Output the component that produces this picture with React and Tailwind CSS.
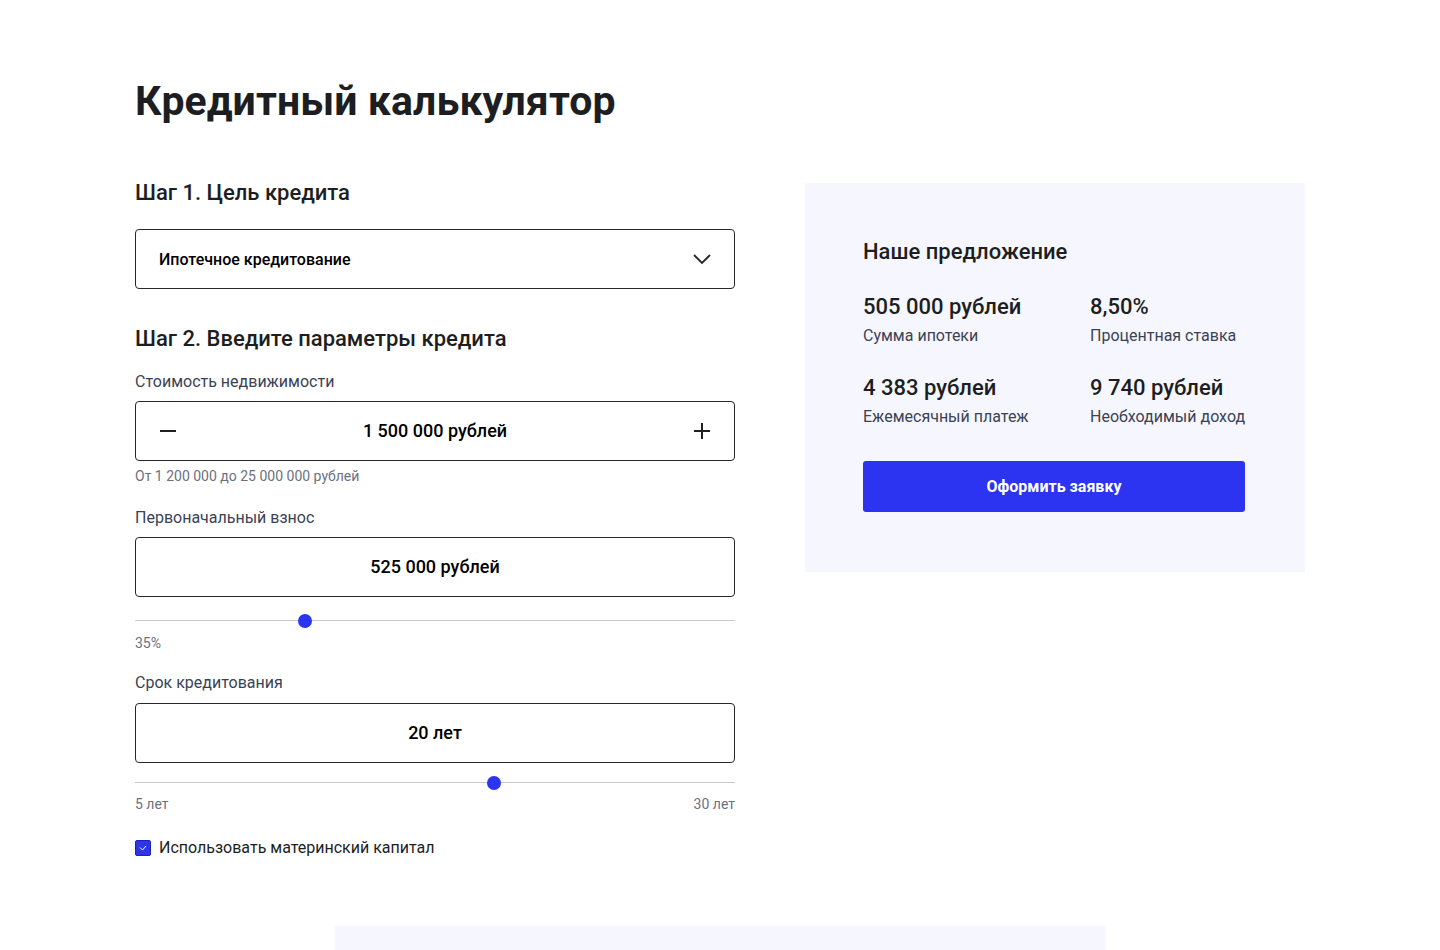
import React from "react";

function Slider({ pos }) {
  return (
    <div className="relative h-[14px] w-full">
      <div className="absolute left-0 right-0 top-[6px] h-px bg-[#c5c7d3]" />
      <div
        className="absolute top-0 h-[14px] w-[14px] -ml-[7px] rounded-full bg-[#2b34f0]"
        style={{ left: pos }}
      />
    </div>
  );
}

function Field({ children }) {
  return (
    <div className="flex h-[60px] w-full items-center justify-center rounded-[4px] border border-[#26272b] text-[18px] font-medium leading-[24px] text-black">
      {children}
    </div>
  );
}

export default function App() {
  return (
    <div className="min-h-[950px] bg-white text-[#1d1e22]" style={{ fontFamily: "Roboto, 'Noto Sans', sans-serif" }}>
      <div className="mx-auto w-[1170px] pt-[73px]">
        <h1 className="text-[41px] font-bold leading-[56px] tracking-[0.1px] text-[#1d1e22]">Кредитный калькулятор</h1>
        <div className="mt-[50px] flex gap-[70px]">
          <div className="w-[600px]">
            <h2 className="text-[22px] font-medium leading-[28px]">Шаг 1. Цель кредита</h2>
            <div className="mt-[22px] flex h-[60px] items-center justify-between rounded-[4px] border border-[#26272b] pl-[23px] pr-[22px]">
              <span className="pt-[2px] text-[16px] font-medium leading-[20px] text-black">Ипотечное кредитование</span>
              <svg width="20" height="12" viewBox="0 0 20 12" fill="none">
                <path d="M2 2l8 8 8-8" stroke="#26272b" strokeWidth="1.8" />
              </svg>
            </div>
            <h2 className="mt-[36px] text-[22px] font-medium leading-[28px]">Шаг 2. Введите параметры кредита</h2>
            <div className="mt-[19px] text-[16px] leading-[20px] text-[#3b4255]">Стоимость недвижимости</div>
            <div className="mt-[9px] flex h-[60px] items-center justify-between rounded-[4px] border border-[#26272b] px-[23px]">
              <svg width="18" height="18" viewBox="0 0 18 18" fill="none">
                <path d="M1 9h16" stroke="#1f2024" strokeWidth="2" />
              </svg>
              <span className="text-[18px] font-medium leading-[24px] text-black">1 500 000 рублей</span>
              <svg width="18" height="18" viewBox="0 0 18 18" fill="none">
                <path d="M1 9h16M9 1v16" stroke="#1f2024" strokeWidth="2" />
              </svg>
            </div>
            <div className="mt-[6px] text-[14px] leading-[18px] text-[#6b7180]">От 1 200 000 до 25 000 000 рублей</div>
            <div className="mt-[23px] text-[16px] leading-[20px] text-[#3b4255]">Первоначальный взнос</div>
            <div className="mt-[9px]">
              <Field>525 000 рублей</Field>
            </div>
            <div className="mt-[17px]">
              <Slider pos="170px" />
            </div>
            <div className="mt-[6px] text-[14px] leading-[18px] text-[#6b7180]">35%</div>
            <div className="mt-[21px] text-[16px] leading-[20px] text-[#3b4255]">Срок кредитования</div>
            <div className="mt-[10px]">
              <Field>20 лет</Field>
            </div>
            <div className="mt-[13px]">
              <Slider pos="359px" />
            </div>
            <div className="mt-[5px] flex justify-between text-[14px] leading-[18px] text-[#6b7180]">
              <span>5 лет</span>
              <span>30 лет</span>
            </div>
            <label className="mt-[25px] flex h-[20px] items-center gap-[8px]">
              <span className="flex h-[16px] w-[16px] items-center justify-center rounded-[2px] border border-[#1b22b8] bg-[#2f35e6]">
                <svg width="8" height="6" viewBox="0 0 8 6" fill="none">
                  <path d="M1 2.5l2.5 2.5L7 1" stroke="white" strokeWidth="1" />
                </svg>
              </span>
              <span className="text-[16px] leading-[20px] text-[#1d1e22]">Использовать материнский капитал</span>
            </label>
          </div>
          <div className="mt-[4px] h-[389px] w-[500px] bg-[#f6f7fe] px-[58px] pt-[55px]">
            <h3 className="text-[22px] font-medium leading-[28px]">Наше предложение</h3>
            <div className="mt-[27px] grid grid-cols-[227px_1fr] gap-y-[28px]">
              <div>
                <div className="text-[22px] font-medium leading-[28px]">505 000 рублей</div>
                <div className="mt-[5px] text-[16px] leading-[20px] text-[#3b4255]">Сумма ипотеки</div>
              </div>
              <div>
                <div className="text-[22px] font-medium leading-[28px]">8,50%</div>
                <div className="mt-[5px] text-[16px] leading-[20px] text-[#3b4255]">Процентная ставка</div>
              </div>
              <div>
                <div className="text-[22px] font-medium leading-[28px]">4 383 рублей</div>
                <div className="mt-[5px] text-[16px] leading-[20px] text-[#3b4255]">Ежемесячный платеж</div>
              </div>
              <div>
                <div className="text-[22px] font-medium leading-[28px]">9 740 рублей</div>
                <div className="mt-[5px] text-[16px] leading-[20px] text-[#3b4255]">Необходимый доход</div>
              </div>
            </div>
            <button className="mt-[34px] flex h-[51px] w-[382px] items-center justify-center rounded-[3px] bg-[#2c33f1] text-[16px] font-bold leading-[20px] text-white">
              Оформить заявку
            </button>
          </div>
        </div>
      </div>
      <div className="mx-auto mt-[68px] h-[24px] w-[770px] bg-[#f6f7fe]" />
    </div>
  );
}
